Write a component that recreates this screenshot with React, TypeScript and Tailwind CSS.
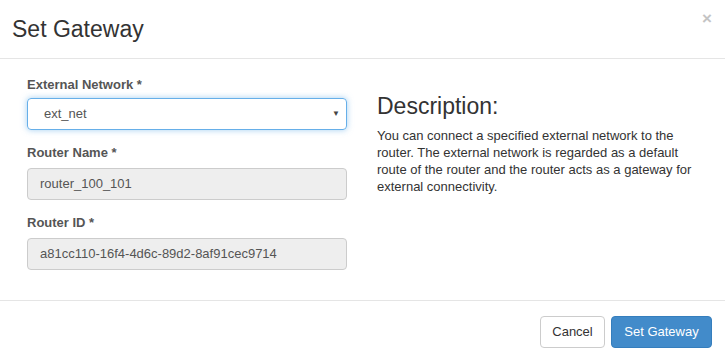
const FIELDS = [
  { label: "Router Name *", value: "router_100_101" },
  { label: "Router ID *", value: "a81cc110-16f4-4d6c-89d2-8af91cec9714" },
];

export default function App() {
  return (
    <div className="flex h-[360px] w-[725px] flex-col bg-white font-['Liberation_Sans',Arial,sans-serif] text-[#333]">
      {/* header */}
      <div className="relative flex h-[59px] shrink-0 items-center border-b border-[#e5e5e5] px-[12px]">
        <h3 className="text-[23px] leading-none text-[#333]">Set Gateway</h3>
        <button
          type="button"
          className="absolute right-[13px] top-[10px] text-[17px] font-bold leading-none text-[#c4c4c4]"
          aria-label="Close"
        >
          ×
        </button>
      </div>

      {/* body */}
      <div className="flex h-[241px] shrink-0 px-[27px] pt-[17px]">
        <div className="flex w-[320px] shrink-0 flex-col">
          <label className="mb-[4px] text-[13px] font-bold leading-[18px] text-[#555]">
            External Network *
          </label>
          <div className="flex h-[32px] items-center justify-between rounded-[4px] border border-[#66afe9] pl-[16px] pr-[6px] text-[13px] text-[#555] shadow-[0_0_6px_rgba(102,175,233,0.6)]">
            <span>ext_net</span>
            <span className="text-[8px] text-[#444]">▼</span>
          </div>
          {FIELDS.map((field) => (
            <div key={field.label} className="mt-[14px] flex flex-col">
              <label className="mb-[6px] text-[13px] font-bold leading-[18px] text-[#555]">
                {field.label}
              </label>
              <div className="flex h-[32px] items-center rounded-[4px] border border-[#ccc] bg-[#eee] px-[12px] text-[13px] text-[#555]">
                {field.value}
              </div>
            </div>
          ))}
        </div>
        <div className="ml-[30px] w-[325px] shrink-0 pt-[17px]">
          <h3 className="text-[23px] leading-[26px] text-[#333]">Description:</h3>
          <p className="mt-[8px] text-[13px] leading-[17px] text-[#333]">
            You can connect a specified external network to the router. The
            external network is regarded as a default route of the router and
            the router acts as a gateway for external connectivity.
          </p>
        </div>
      </div>

      {/* footer */}
      <div className="flex flex-1 items-start justify-end gap-[6px] border-t border-[#e5e5e5] pr-[13px] pt-[15px]">
        <button
          type="button"
          className="h-[32px] w-[65px] rounded-[4px] border border-[#ccc] bg-white text-[13px] text-[#333]"
        >
          Cancel
        </button>
        <button
          type="button"
          className="h-[32px] w-[101px] rounded-[4px] border border-[#357ebd] bg-[#428bca] text-[13px] text-white"
        >
          Set Gateway
        </button>
      </div>
    </div>
  );
}
